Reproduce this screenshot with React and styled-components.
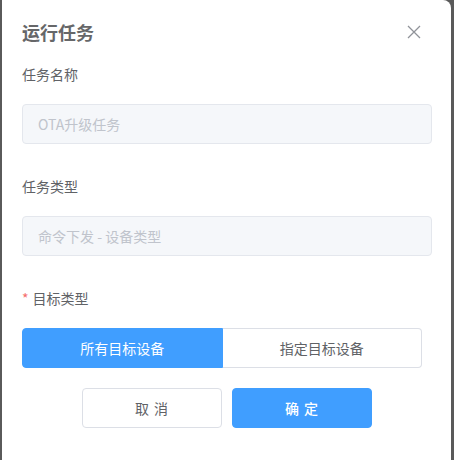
import React from "react";
import styled, { createGlobalStyle } from "styled-components";

const GlobalStyle = createGlobalStyle`
  html, body {
    margin: 0;
    padding: 0;
    background: #5a5a5a;
    height: 100%;
    overflow: hidden;
  }
  * { box-sizing: border-box; }
`;

const Dialog = styled.div`
  margin-left: 2px;
  width: 449px;
  height: 470px;
  background: #fff;
  border-radius: 0 8px 0 0;
  font-family: "Noto Sans CJK SC", "Noto Sans", sans-serif;
`;

const Header = styled.div`
  display: flex;
  align-items: center;
  justify-content: space-between;
  padding: 20px 20px 10px 20px;
  height: 54px;
`;

const Title = styled.div`
  font-size: 18px;
  line-height: 24px;
  font-weight: 700;
  color: #666769;
`;

const Close = styled.button`
  border: 0;
  background: none;
  padding: 0;
  margin-right: 10px;
  width: 14px;
  height: 14px;
  display: flex;
  cursor: pointer;
`;

const Body = styled.div`
  padding: 0 19px 0 20px;
`;

const Item = styled.div`
  margin-bottom: ${(p) => p.$mb ?? 22}px;
`;

const Label = styled.div`
  font-size: 14px;
  line-height: 40px;
  color: #606266;
  padding-bottom: 10px;
`;

const Star = styled.span`
  color: #f56c6c;
  margin-right: 4px;
`;

const Input = styled.input`
  display: block;
  width: 100%;
  height: 40px;
  padding: 0 15px;
  border: 1px solid #e4e7ed;
  border-radius: 4px;
  background: #f5f7fa;
  font-family: inherit;
  font-size: 14px;
  color: #c0c4cc;
  outline: none;
  &::placeholder { color: #c0c4cc; }
`;

const RadioGroup = styled.div`
  display: flex;
  width: 400px;
  height: 40px;
`;

const RadioBtn = styled.div`
  flex: 1;
  display: flex;
  align-items: center;
  justify-content: center;
  font-size: 14px;
  color: ${(p) => (p.$active ? "#fff" : "#606266")};
  background: ${(p) => (p.$active ? "#409eff" : "#fff")};
  border: 1px solid ${(p) => (p.$active ? "#409eff" : "#dcdfe6")};
  border-radius: ${(p) => (p.$first ? "4px 0 0 4px" : "0 4px 4px 0")};
  ${(p) => (!p.$first ? "border-left: 0;" : "")}
`;

const Footer = styled.div`
  display: flex;
  justify-content: center;
  gap: 10px;
  padding-top: 20px;
`;

const Button = styled.button`
  width: 140px;
  height: 40px;
  border-radius: 4px;
  font-family: inherit;
  font-size: 14px;
  letter-spacing: 1px;
  cursor: pointer;
  font-weight: ${(p) => (p.$primary ? 500 : 400)};
  border: 1px solid ${(p) => (p.$primary ? "#409eff" : "#dcdfe6")};
  background: ${(p) => (p.$primary ? "#409eff" : "#fff")};
  color: ${(p) => (p.$primary ? "#fff" : "#606266")};
`;

export default function App() {
  return (
    <>
      <GlobalStyle />
      <Dialog>
        <Header>
          <Title>运行任务</Title>
          <Close aria-label="close">
            <svg width="14" height="14" viewBox="0 0 14 14">
              <path d="M1 1L13 13M13 1L1 13" stroke="#909399" strokeWidth="1.3" />
            </svg>
          </Close>
        </Header>
        <Body>
          <Item>
            <Label>任务名称</Label>
            <Input disabled placeholder="OTA升级任务" />
          </Item>
          <Item>
            <Label>任务类型</Label>
            <Input disabled placeholder="命令下发 - 设备类型" />
          </Item>
          <Item $mb={0}>
            <Label>
              <Star>*</Star>目标类型
            </Label>
            <RadioGroup>
              <RadioBtn $active $first>所有目标设备</RadioBtn>
              <RadioBtn>指定目标设备</RadioBtn>
            </RadioGroup>
          </Item>
          <Footer>
            <Button>取 消</Button>
            <Button $primary>确 定</Button>
          </Footer>
        </Body>
      </Dialog>
    </>
  );
}
